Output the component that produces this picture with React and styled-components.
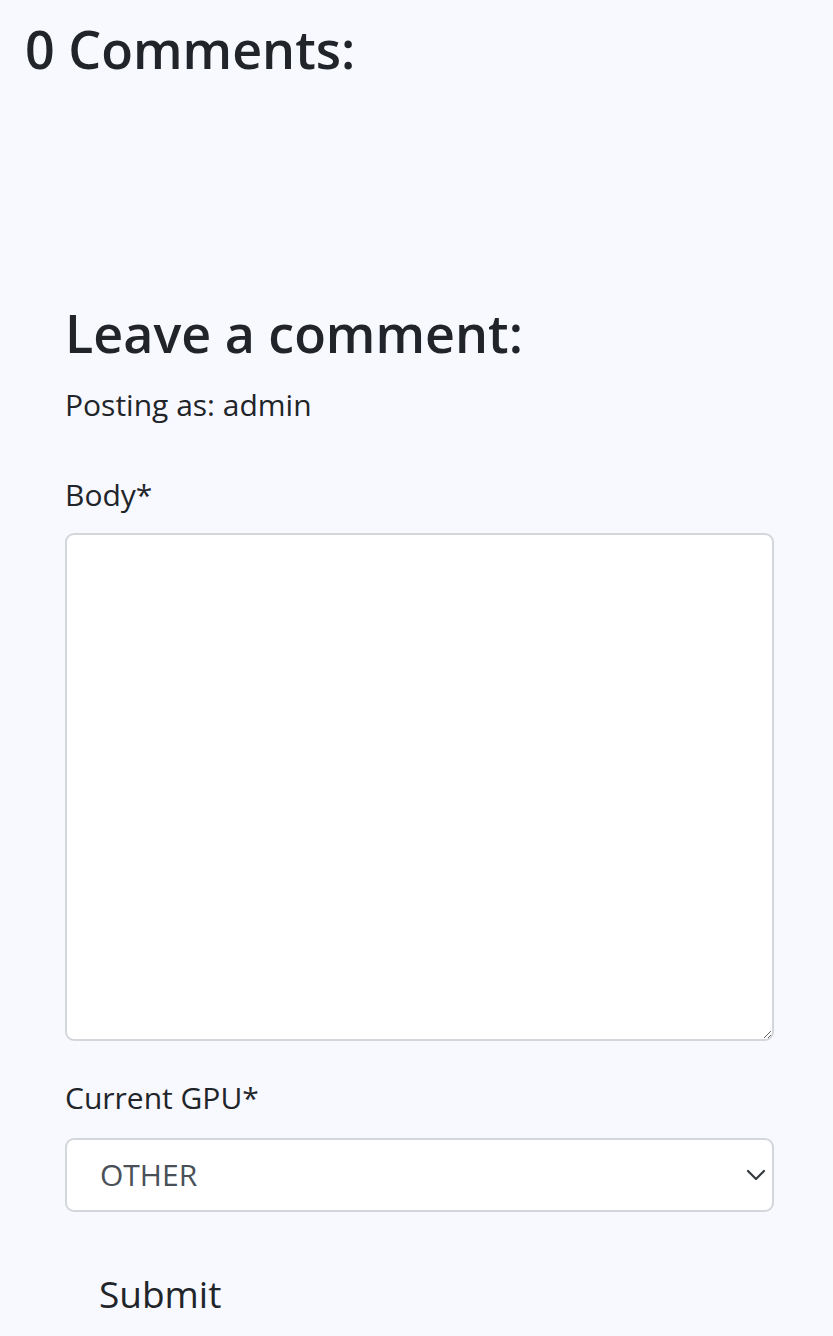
import React, { useState } from "react";
import styled, { createGlobalStyle } from "styled-components";

const GlobalStyle = createGlobalStyle`
    body {
        margin: 0;
        background: #f8f8ff;
        color: #212529;
        font-family: "Open Sans", "Noto Sans", "Liberation Sans", sans-serif;
    }
    * {
        box-sizing: border-box;
    }
`

const Page = styled.div`
    padding-top: 18px;
`

const CommentsTitle = styled.h2`
    margin: 0 0 0 25px;
    font-size: 52px;
    font-weight: 600;
    line-height: 1.2;
`

const CommentList = styled.ul`
    margin: 0;
    padding: 0;
    list-style: none;
    min-height: 222px;
`

const FormSection = styled.section`
    padding: 0 59px 0 65px;
`

const FormTitle = styled.h2`
    margin: 0;
    font-size: 52px;
    font-weight: 600;
    line-height: 1.2;
`

const PostingAs = styled.p`
    margin: 17px 0 0;
    font-size: 30px;
    line-height: 1.5;
`

const Field = styled.div`
    margin-top: ${props => props.gap}px;
`

const Label = styled.label`
    display: block;
    font-size: 30px;
    line-height: 1.5;
    margin-bottom: ${props => props.gap}px;
`

const TextArea = styled.textarea`
    display: block;
    width: 100%;
    height: 508px;
    background: #fff;
    border: 2px solid #d3d6da;
    border-radius: 9px;
    padding: 12px 24px;
    font-family: inherit;
    font-size: 30px;
    color: #212529;
    outline: none;
`

const SelectWrap = styled.div`
    position: relative;
`

const Select = styled.select`
    display: block;
    width: 100%;
    height: 74px;
    appearance: none;
    background: #fff;
    border: 2px solid #d3d6da;
    border-radius: 9px;
    padding: 0 60px 0 33px;
    font-family: inherit;
    font-size: 30px;
    color: #495057;
    outline: none;
`

const Chevron = styled.svg`
    position: absolute;
    right: 8px;
    top: 50%;
    transform: translateY(-50%);
    pointer-events: none;
`

const SubmitButton = styled.button`
    margin-top: 40px;
    padding: 14px 32px;
    border: 2px solid transparent;
    background: transparent;
    font-family: inherit;
    font-size: 37px;
    line-height: 1.4;
    color: #212529;
    cursor: pointer;
`

const Footer = styled.footer`
    border-top: 1px solid #e3e3e6;
    height: 40px;
`

const gpus = ["OTHER", "NVIDIA", "AMD", "INTEL"];

const App = () => {
    const [body, setBody] = useState("");
    const [gpu, setGpu] = useState("OTHER");

    return (
        <Page>
            <GlobalStyle />
            <CommentsTitle>0 Comments:</CommentsTitle>
            <CommentList></CommentList>
            <FormSection>
                <FormTitle>Leave a comment:</FormTitle>
                <PostingAs>Posting as: admin</PostingAs>
                <form onSubmit={e => e.preventDefault()}>
                    <Field gap={45}>
                        <Label htmlFor="body" gap={16}>Body*</Label>
                        <TextArea id="body" value={body} onChange={e => setBody(e.target.value)} />
                    </Field>
                    <Field gap={34}>
                        <Label htmlFor="gpu" gap={18}>Current GPU*</Label>
                        <SelectWrap>
                            <Select id="gpu" value={gpu} onChange={e => setGpu(e.target.value)}>
                                {gpus.map(g => <option key={g}>{g}</option>)}
                            </Select>
                            <Chevron width="20" height="12" viewBox="0 0 20 12">
                                <path d="M2 2l8 8 8-8" fill="none" stroke="#343a40" strokeWidth="2.2" strokeLinecap="round" strokeLinejoin="round" />
                            </Chevron>
                        </SelectWrap>
                    </Field>
                    <SubmitButton type="submit">Submit</SubmitButton>
                </form>
            </FormSection>
            <Footer />
        </Page>
    )
}

export default App
